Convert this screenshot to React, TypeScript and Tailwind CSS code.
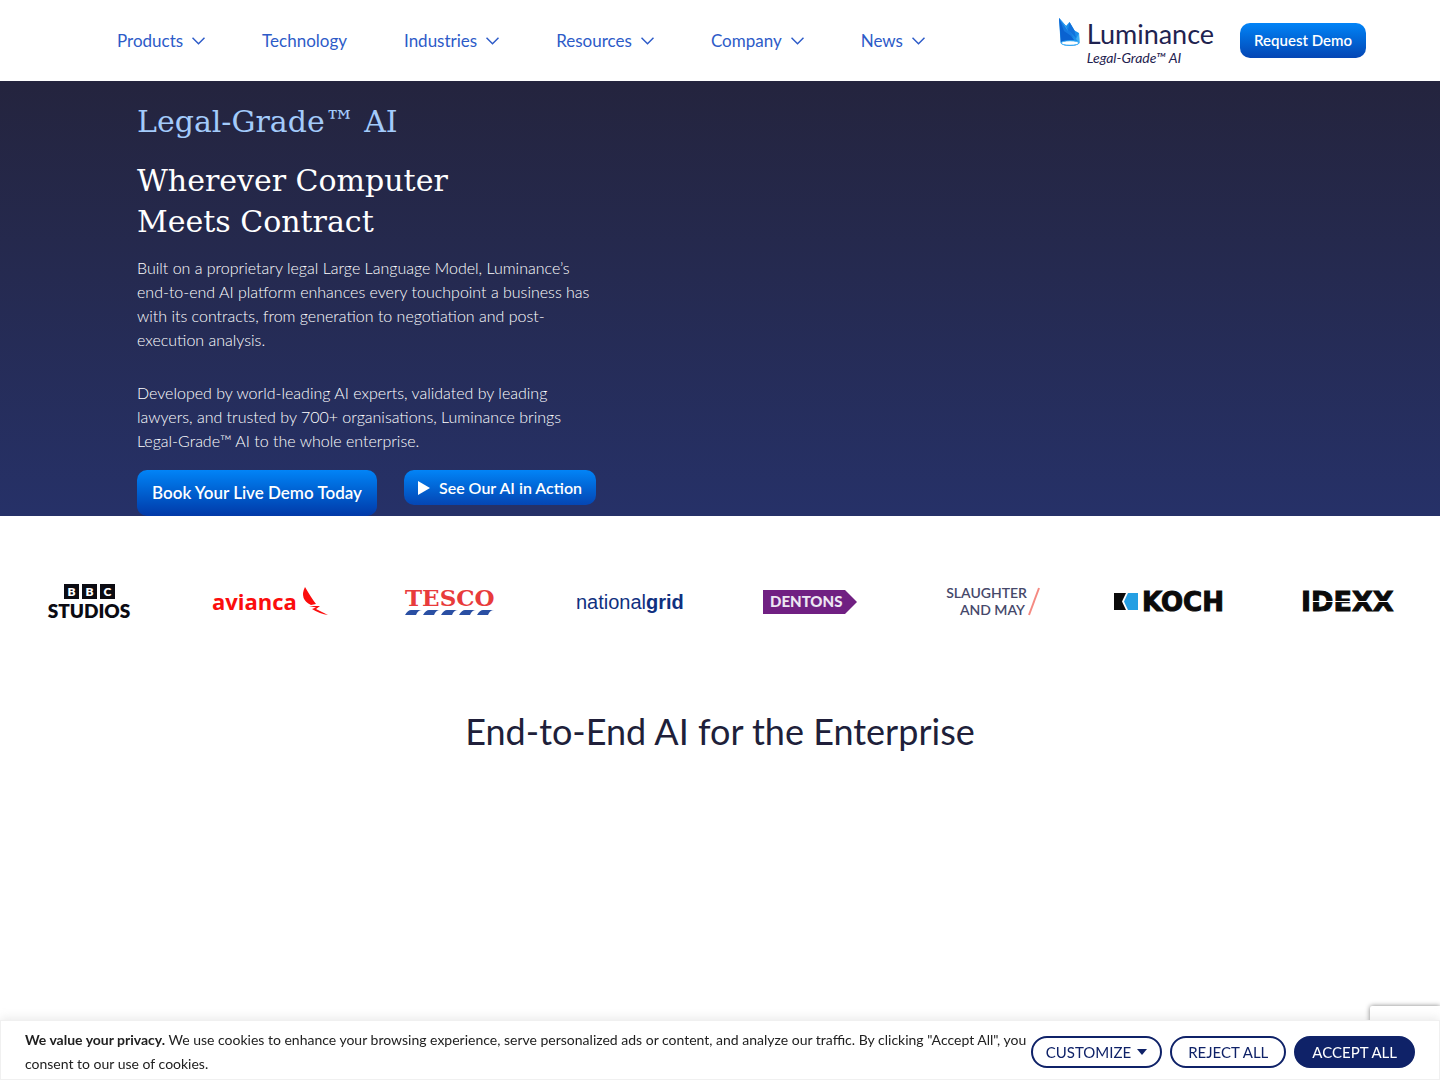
import React from 'react';

const navItems = [
  { label: 'Products', hasMenu: true },
  { label: 'Technology', hasMenu: false },
  { label: 'Industries', hasMenu: true },
  { label: 'Resources', hasMenu: true },
  { label: 'Company', hasMenu: true },
  { label: 'News', hasMenu: true },
];

function Chevron() {
  return (
    <svg width="13" height="8" viewBox="0 0 13 8" fill="none" stroke="currentColor" strokeWidth="1.5">
      <path d="M0.5 0.8 L6.5 6.8 L12.5 0.8" />
    </svg>
  );
}

function LuminanceLogo() {
  return (
    <a href="#" aria-label="Luminance" className="flex gap-[7px] text-[#1f2350]">
      <svg className="mt-px" width="21" height="28" viewBox="0 0 21 28">
        <path d="M0 0 L7 8 L10.5 4 L15.5 12.5 L20 15 L20.5 25 Q18 28 11 28 Q4 28 1.5 24.5 Z" fill="#1a8eea" />
        <path d="M0 0 L15 22 L2 25 Z" fill="#0a62d0" />
        <path d="M0 0 L7 8 L15 20 L5 13 Z" fill="#1579e0" />
        <path d="M0 0 L7 8 L9 13 Z" fill="#38a9f4" />
        <path d="M10.5 4 L15.5 12.5 L17 20 L9 12 Z" fill="#1272dc" />
        <path d="M20 15 L20.5 25 L17 21 Z" fill="#3fb0f5" />
        <ellipse cx="11" cy="25" rx="9" ry="2.3" fill="#ffffff" stroke="#2ba6f5" />
      </svg>
      <span className="flex flex-col">
        <span className="text-[27px] leading-[34px]">Luminance</span>
        <span className="text-[14px] leading-[14px] italic">Legal-Grade™ AI</span>
      </span>
    </a>
  );
}

function Header() {
  return (
    <header className="flex h-[81px] items-center justify-between bg-white pl-[117px] pr-[74px]">
      <nav className="flex items-center gap-[57px]">
        {navItems.map((item) => (
          <a key={item.label} href="#" className="flex items-center gap-[9px] text-[17px] leading-6 text-[#2d5bc8]">
            {item.label}
            {item.hasMenu && <Chevron />}
          </a>
        ))}
      </nav>
      <div className="flex items-center gap-[26px]">
        <LuminanceLogo />
        <button className="h-[35px] rounded-[10px] bg-linear-to-b from-[#0284f7] to-[#0546b4] px-[14px] text-[15px] font-semibold text-white">
          Request Demo
        </button>
      </div>
    </header>
  );
}

function Hero() {
  return (
    <section className="bg-linear-to-b from-[#24243e] to-[#263168] pl-[137px] pt-5 whitespace-nowrap">
      <div className="font-['DejaVu_Serif',serif] text-[30px] leading-[41px]">
        <h2 className="text-[#a3cbfb]">Legal-Grade™ AI</h2>
        <h1 className="mt-[18px] text-white">
          Wherever Computer
          <br />
          Meets Contract
        </h1>
      </div>
      <div className="mt-[14px] space-y-[29px] text-[16px] leading-6 font-light text-white">
        <p>
          Built on a proprietary legal Large Language Model, Luminance’s
          <br />
          end-to-end AI platform enhances every touchpoint a business has
          <br />
          with its contracts, from generation to negotiation and post-
          <br />
          execution analysis.
        </p>
        <p>
          Developed by world-leading AI experts, validated by leading
          <br />
          lawyers, and trusted by 700+ organisations, Luminance brings
          <br />
          Legal-Grade™ AI to the whole enterprise.
        </p>
      </div>
      <div className="mt-[17px] flex items-start gap-[27px] font-semibold text-white">
        <button className="h-[46px] rounded-[10px] bg-linear-to-b from-[#0284f7] to-[#0339a8] px-[15px] text-[17px]">
          Book Your Live Demo Today
        </button>
        <button className="flex h-[35px] items-center gap-[9px] rounded-[10px] bg-linear-to-b from-[#0284f7] to-[#0546b4] px-[14px] text-[16px]">
          <svg width="12" height="14" viewBox="0 0 12 14" fill="currentColor">
            <path d="M0 0 L12 7 L0 14 Z" />
          </svg>
          See Our AI in Action
        </button>
      </div>
    </section>
  );
}

function BbcStudios() {
  return (
    <svg className="overflow-visible" width="86" height="36" viewBox="0 0 86 36" fontFamily="Lato, sans-serif" fontWeight="800" textAnchor="middle">
      {['B', 'B', 'C'].map((letter, i) => (
        <g key={i}>
          <rect x={17 + i * 18} y="0" width="15" height="15" fill="#0b0b12" />
          <text x={24.5 + i * 18} y="12" fontSize="12" fill="#ffffff">{letter}</text>
        </g>
      ))}
      <text x="42" y="34" fontSize="19" fill="#0b0b12">STUDIOS</text>
    </svg>
  );
}

function Avianca() {
  return (
    <svg className="overflow-visible" width="116" height="30" viewBox="0 0 116 30" fill="#fb0d0d">
      <text x="0" y="23" fontFamily="'Open Sans', sans-serif" fontWeight="700" fontSize="22">avianca</text>
      <path d="M93 0 Q100 12 104 17 L99 18 Q87 12 93 0 Z" />
      <path d="M97 19 L108 19 L104 22 L116 28 Q108 27 100 22 L104 20.5 Z" />
    </svg>
  );
}

function Tesco() {
  return (
    <svg className="overflow-visible" width="90" height="28" viewBox="0 0 90 28">
      <text x="0" y="18" fontFamily="'DejaVu Serif', serif" fontWeight="700" fontSize="23" fill="#e83b3b">TESCO</text>
      {[0, 18, 36, 54, 72].map((x) => (
        <path key={x} d={`M${x} 27 Q${x + 3} 22 ${x + 6} 22 H${x + 17} Q${x + 13} 22 ${x + 11} 27 Z`} fill="#2a4fa3" />
      ))}
    </svg>
  );
}

function NationalGrid() {
  return (
    <svg className="overflow-visible" width="110" height="28" viewBox="0 0 110 28" fontFamily="'Liberation Sans', sans-serif" fontSize="20" fill="#10307f">
      <text x="1" y="21">
        national<tspan fontWeight="700">grid</tspan>
      </text>
    </svg>
  );
}

function Dentons() {
  return (
    <svg className="overflow-visible" width="96" height="26" viewBox="0 0 96 26">
      <path d="M1 1 H83 L95 13 L83 25 H1 Z" fill="#702082" />
      <text x="8" y="18" fontFamily="Lato, sans-serif" fontWeight="900" fontSize="15" fill="#ece6f2">DENTONS</text>
    </svg>
  );
}

function SlaughterAndMay() {
  return (
    <svg className="overflow-visible" width="102" height="30" viewBox="0 0 102 30" fontFamily="Lato, sans-serif" fontWeight="600" fontSize="14" fill="#46486a" textAnchor="end">
      <text x="88" y="11">SLAUGHTER</text>
      <text x="86" y="28">AND MAY</text>
      <path d="M100 1 L90 28" stroke="#f58a82" strokeWidth="2" />
    </svg>
  );
}

function Koch() {
  return (
    <svg className="overflow-visible" width="114" height="20" viewBox="0 0 114 20">
      <path d="M1 1 H13 L9 9.5 L13 18 H1 Z" fill="#0b0b0b" />
      <path d="M15 1 H25 V18 H15 L11 9.5 Z" fill="#259fe3" />
      <text x="29" y="19" fontFamily="'DejaVu Sans', sans-serif" fontWeight="700" fontSize="26" fill="#0b0b0b" stroke="#0b0b0b">KOCH</text>
    </svg>
  );
}

function Idexx() {
  return (
    <svg className="overflow-visible" width="98" height="20" viewBox="0 0 98 20">
      <text x="0" y="19" fontFamily="'DejaVu Sans', sans-serif" fontWeight="700" fontSize="27" fill="#0b0b0b" stroke="#0b0b0b">IDEXX</text>
      <path d="M11 9.5 H96" stroke="#ffffff" />
    </svg>
  );
}

const clients = [BbcStudios, Avianca, Tesco, NationalGrid, Dentons, SlaughterAndMay, Koch, Idexx];

function CookieBar() {
  return (
    <div className="fixed inset-x-0 bottom-0 flex items-center justify-between border border-[#f0f0f0] bg-white pt-[7px] pb-[3px] pl-6 pr-6 shadow-[0_-1px_10px_0_#acabab4d]">
      <p className="text-[14px] leading-6 whitespace-nowrap text-[#212121]">
        <strong className="font-bold">We value your privacy.</strong> We use cookies to enhance your browsing
        experience, serve personalized ads or content, and analyze our traffic. By clicking "Accept All", you
        <br />
        consent to our use of cookies.
      </p>
      <div className="flex gap-2 text-[15px] text-[#0f2268]">
        <button className="flex h-8 items-center gap-[6px] rounded-full border-2 border-[#0f2268] px-[13px] whitespace-nowrap">
          CUSTOMIZE
          <svg width="10" height="6" viewBox="0 0 10 6" fill="currentColor">
            <path d="M0 0 H10 L5 6 Z" />
          </svg>
        </button>
        <button className="h-8 rounded-full border-2 border-[#0f2268] px-4 whitespace-nowrap">REJECT ALL</button>
        <button className="h-8 rounded-full border-2 border-[#0f2268] bg-[#0f2268] px-4 whitespace-nowrap text-white">ACCEPT ALL</button>
      </div>
    </div>
  );
}

export default function App() {
  return (
    <div className="min-h-screen bg-white font-['Lato',sans-serif]">
      <Header />
      <main>
        <Hero />

        {/* Client logos */}
        <section className="grid grid-cols-8 items-center justify-items-center pt-[68px]">
          {clients.map((Logo, i) => (
            <Logo key={i} />
          ))}
        </section>

        <h2 className="mt-[86px] text-center text-[36px] leading-[50px] text-[#201f3a]">
          End-to-End AI for the Enterprise
        </h2>
      </main>

      {/* Badge peeking out behind the cookie bar */}
      <div className="fixed right-0 bottom-[14px] h-[60px] w-[70px] rounded-l-xs bg-white shadow-[0_0_5px_#808080]" />
      <CookieBar />
    </div>
  );
}
